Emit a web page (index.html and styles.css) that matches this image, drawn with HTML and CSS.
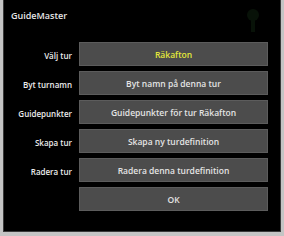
FILE: index.html
```html
<!DOCTYPE html>
<html lang="sv">
<head>
  <meta charset="UTF-8" />
  <title>GuideMaster</title>
  <link rel="stylesheet" href="styles.css">
</head>
<body>
  <div class="dialog">
    <div class="title-bar">
      <span class="title">GuideMaster</span>
      <svg class="ghost" width="26" height="30" viewBox="0 0 26 30">
        <circle cx="13" cy="9" r="6" fill="#081208" />
        <rect x="11" y="14" width="4" height="12" fill="#081208" />
      </svg>
    </div>
    <div class="rows">
      <span class="label">Välj tur</span>
      <button class="btn btn-current">Räkafton</button>
      <span class="label">Byt turnamn</span>
      <button class="btn">Byt namn på denna tur</button>
      <span class="label">Guidepunkter</span>
      <button class="btn">Guidepunkter för tur Räkafton</button>
      <span class="label">Skapa tur</span>
      <button class="btn">Skapa ny turdefinition</button>
      <span class="label">Radera tur</span>
      <button class="btn">Radera denna turdefinition</button>
      <span class="label"></span>
      <button class="btn">OK</button>
    </div>
  </div>
</body>
</html>
```

FILE: styles.css
```css
html, body {
  margin: 0;
  padding: 0;
  width: 284px;
  height: 236px;
  background-color: #c4c4c4;
  font-family: 'Open Sans', 'Noto Sans', Arial, sans-serif;
  overflow: hidden;
}
.dialog {
  box-sizing: border-box;
  width: 278px;
  height: 232px;
  margin: 0 3px;
  background-color: #000;
  border: 1px solid #3a3a3a;
  border-top: none;
}
.title-bar {
  height: 42px;
  display: flex;
  justify-content: space-between;
  padding: 0 14px 0 7px;
}
.title {
  color: #e6e6e6;
  font-size: 9px;
  font-weight: 600;
  margin-top: 9px;
}
.ghost {
  margin-top: 6px;
}
.rows {
  display: grid;
  grid-template-columns: 68px 189px;
  column-gap: 7px;
  row-gap: 5px;
}
.label {
  color: #ececec;
  font-size: 8px;
  font-weight: 600;
  text-align: right;
  align-self: center;
  padding-top: 2px;
}
.btn {
  height: 24px;
  padding: 0;
  margin: 0;
  border: 1px solid #5c5c5c;
  background-color: #4c4c4c;
  color: #e4e4e4;
  font-family: inherit;
  font-size: 8.5px;
  font-weight: 600;
}
.btn-current {
  color: #e4e83a;
}
```
